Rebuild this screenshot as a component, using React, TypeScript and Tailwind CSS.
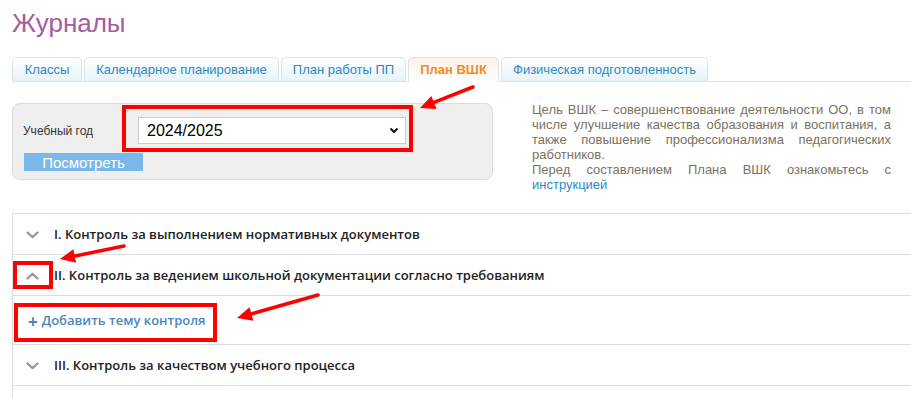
import React from "react";

const tabs = [
  { label: "Классы", w: "w-[70px]", active: false },
  { label: "Календарное планирование", w: "w-[195px]", active: false },
  { label: "План работы ПП", w: "w-[125px]", active: false },
  { label: "План ВШК", w: "w-[91px]", active: true },
  { label: "Физическая подготовленность", w: "w-[207px]", active: false },
];

function Arrow({ x1, y1, x2, y2 }: { x1: number; y1: number; x2: number; y2: number }) {
  const dx = x2 - x1;
  const dy = y2 - y1;
  const len = Math.sqrt(dx * dx + dy * dy);
  const ux = dx / len;
  const uy = dy / len;
  const hl = 15;
  const hw = 7;
  const bx = x2 - ux * hl;
  const by = y2 - uy * hl;
  const p1 = `${x2},${y2}`;
  const p2 = `${bx - uy * hw},${by + ux * hw}`;
  const p3 = `${bx + uy * hw},${by - ux * hw}`;
  return (
    <g>
      <line x1={x1} y1={y1} x2={bx + ux * 2} y2={by + uy * 2} stroke="#f00" strokeWidth={3.5} strokeLinecap="round" />
      <polygon points={`${p1} ${p2} ${p3}`} fill="#f00" />
    </g>
  );
}

function Chevron({ up }: { up?: boolean }) {
  return (
    <svg width="13" height="8" viewBox="0 0 13 8" className="shrink-0">
      <path
        d={up ? "M1.5 6.5 L6.5 1.8 L11.5 6.5" : "M1.5 1.5 L6.5 6.2 L11.5 1.5"}
        fill="none"
        stroke="#9a9a9a"
        strokeWidth="2.4"
        strokeLinecap="round"
        strokeLinejoin="round"
      />
    </svg>
  );
}

export default function App() {
  return (
    <div className="relative w-[911px] h-[398px] overflow-hidden bg-white font-['Liberation_Sans',Arial,sans-serif]">
      <div className="pl-[12px]">
        <h1 className="mt-[8px] text-[26px] leading-[30px] text-[#a35c9e] font-normal">Журналы</h1>

        {/* Tabs */}
        <div className="mt-[19px] flex gap-[2px] border-b border-[#d9e3e8] h-[25px]">
          {tabs.map((t) => (
            <div
              key={t.label}
              className={
                t.active
                  ? `${t.w} h-[25px] flex items-center justify-center rounded-t-[5px] border border-b-0 border-[#d9e3e8] bg-gradient-to-b from-[#fdf1e6] to-white text-[13px] font-bold text-[#f08c22]`
                  : `${t.w} h-[24px] flex items-center justify-center rounded-t-[5px] border border-b-0 border-[#d9e3e8] bg-gradient-to-b from-white to-[#e6f3f9] text-[13px] text-[#2d89c2]`
              }
            >
              {t.label}
            </div>
          ))}
        </div>

        {/* Filter + description */}
        <div className="mt-[21px] flex items-start">
          <div className="w-[481px] h-[77px] rounded-[8px] border border-[#dcdcdc] bg-[#efefef] pl-[10px] pt-[13px]">
            <div className="flex items-center">
              <span className="w-[115px] text-[12px] text-[#333]">Учебный год</span>
              <div className="w-[268px] h-[27px] bg-white border border-[#cccccc] flex items-center justify-between pl-[8px] pr-[6px]">
                <span className="text-[16px] text-black">2024/2025</span>
                <svg width="10" height="7" viewBox="0 0 10 7">
                  <path d="M1.5 1.5 L5 5 L8.5 1.5" fill="none" stroke="#111" strokeWidth="2" />
                </svg>
              </div>
            </div>
            <div className="mt-[9px] ml-[1px] w-[119px] h-[18px] bg-[#7ab8ea] flex items-center justify-center text-[15px] text-white leading-none">
              Посмотреть
            </div>
          </div>
          <div className="ml-[39px] -mt-px w-[359px] text-[13px] leading-[15px] text-[#7a7262] text-justify">
            Цель ВШК – совершенствование деятельности ОО, в том числе улучшение качества образования и воспитания, а также повышение профессионализма педагогических работников.
            <br />
            Перед составлением Плана ВШК ознакомьтесь с <span className="text-[#2d89c2]">инструкцией</span>
          </div>
        </div>

        {/* Accordion */}
        <div className="mt-[21px] border-t border-l border-[#dddddd] font-['Open_Sans',sans-serif] text-[13px] font-semibold text-[#222]">
          <div className="h-[41px] border-b border-[#dddddd] flex items-center pl-[13px] pt-[2px]">
            <Chevron />
            <span className="ml-[15px]">I. Контроль за выполнением нормативных документов</span>
          </div>
          <div className="h-[41px] border-b border-[#dddddd] flex items-center pl-[13px] pt-[2px]">
            <Chevron up />
            <span className="ml-[15px]">II. Контроль за ведением школьной документации согласно требованиям</span>
          </div>
          <div className="h-[49px] border-b border-[#dddddd] flex items-center pl-[15px] pt-[2px] text-[#4a87bf]">
            <span className="text-[17px] leading-none font-bold">+</span>
            <span className="ml-[4px]">Добавить тему контроля</span>
          </div>
          <div className="h-[41px] border-b border-[#dddddd] flex items-center pl-[13px] pt-[2px]">
            <Chevron />
            <span className="ml-[15px]">III. Контроль за качеством учебного процесса</span>
          </div>
          <div className="h-[41px]"></div>
        </div>
      </div>

      {/* Red annotations */}
      <svg className="absolute inset-0 pointer-events-none" width="911" height="398">
        <rect x="124" y="107" width="287" height="43" fill="none" stroke="#f00" strokeWidth="4" />
        <rect x="15" y="263" width="36" height="24" fill="none" stroke="#f00" strokeWidth="4" />
        <rect x="16" y="305" width="199" height="35" fill="none" stroke="#f00" strokeWidth="4" />
        <Arrow x1={473} y1={87} x2={420} y2={108} />
        <Arrow x1={124} y1={246} x2={60} y2={259} />
        <Arrow x1={318} y1={295} x2={237} y2={318} />
      </svg>
    </div>
  );
}
